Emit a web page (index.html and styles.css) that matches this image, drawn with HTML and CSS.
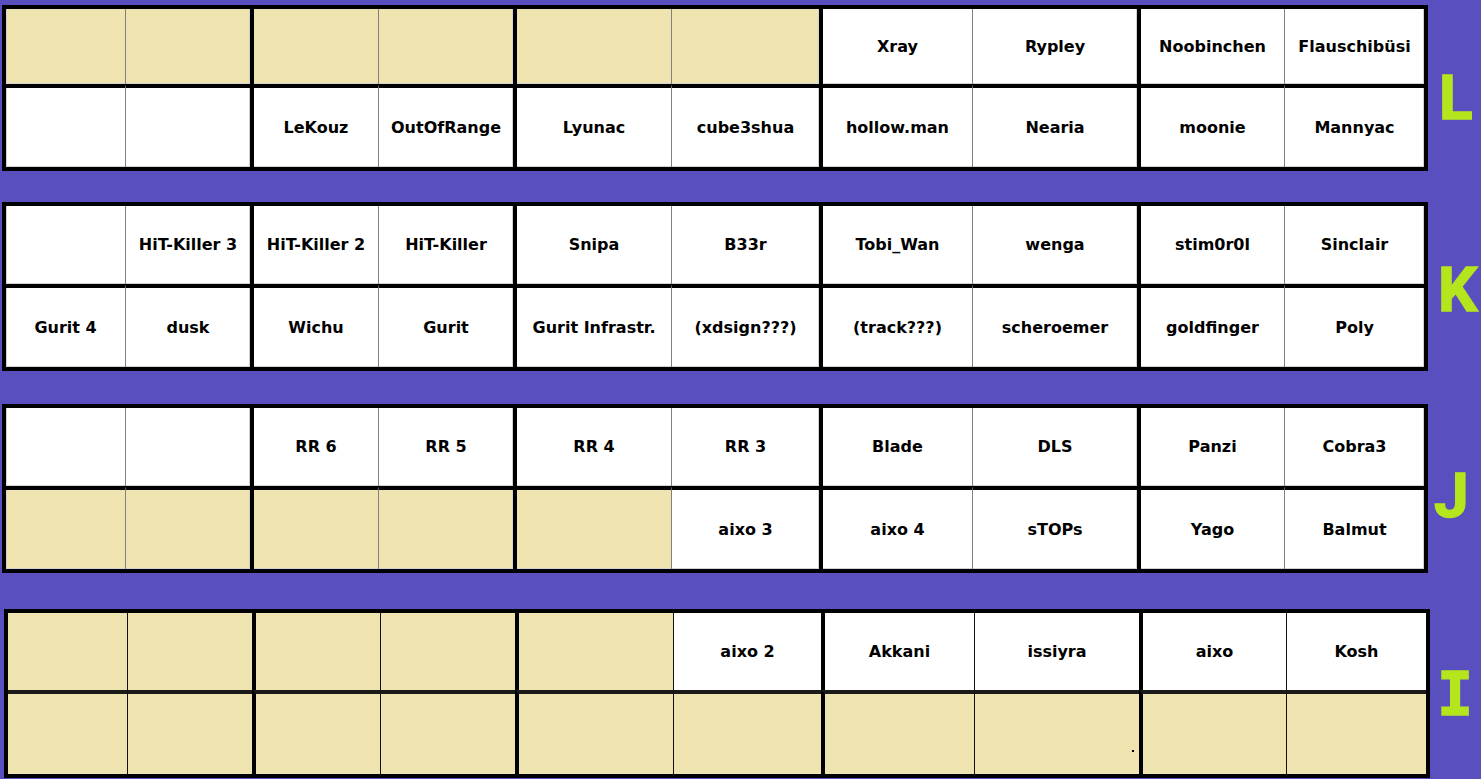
FILE: index.html
```html
<!DOCTYPE html>
<html lang="de">
<head>
<meta charset="utf-8">
<title>Board</title>
<link rel="stylesheet" href="styles.css">
</head>
<body>
<main class="board">
  <section class="block block-l">
    <div class="grid grid-l">
      <div class="cell cream"></div><div class="cell cream"></div><div class="cell cream"></div><div class="cell cream"></div><div class="cell cream"></div><div class="cell cream"></div>
      <div class="cell">Xray</div><div class="cell">Rypley</div><div class="cell">Noobinchen</div><div class="cell">Flauschibüsi</div>
      <div class="cell"></div><div class="cell"></div><div class="cell">LeKouz</div><div class="cell">OutOfRange</div><div class="cell">Lyunac</div>
      <div class="cell">cube3shua</div><div class="cell">hollow.man</div><div class="cell">Nearia</div><div class="cell">moonie</div><div class="cell">Mannyac</div>
    </div>
    <div class="tag tag-l">L</div>
  </section>

  <section class="block block-k">
    <div class="grid grid-k">
      <div class="cell"></div><div class="cell">HiT-Killer 3</div><div class="cell">HiT-Killer 2</div><div class="cell">HiT-Killer</div><div class="cell">Snipa</div>
      <div class="cell">B33r</div><div class="cell">Tobi_Wan</div><div class="cell">wenga</div><div class="cell">stim0r0l</div><div class="cell">Sinclair</div>
      <div class="cell">Gurit 4</div><div class="cell">dusk</div><div class="cell">Wichu</div><div class="cell">Gurit</div><div class="cell">Gurit Infrastr.</div>
      <div class="cell">(xdsign???)</div><div class="cell">(track???)</div><div class="cell">scheroemer</div><div class="cell">goldfinger</div><div class="cell">Poly</div>
    </div>
    <div class="tag tag-k">K</div>
  </section>

  <section class="block block-j">
    <div class="grid grid-j">
      <div class="cell"></div><div class="cell"></div><div class="cell">RR 6</div><div class="cell">RR 5</div><div class="cell">RR 4</div>
      <div class="cell">RR 3</div><div class="cell">Blade</div><div class="cell">DLS</div><div class="cell">Panzi</div><div class="cell">Cobra3</div>
      <div class="cell cream"></div><div class="cell cream"></div><div class="cell cream"></div><div class="cell cream"></div><div class="cell cream"></div>
      <div class="cell">aixo 3</div><div class="cell">aixo 4</div><div class="cell">sTOPs</div><div class="cell">Yago</div><div class="cell">Balmut</div>
    </div>
    <div class="tag tag-j">J</div>
  </section>

  <section class="block block-i">
    <div class="grid grid-i">
      <div class="cell cream"></div><div class="cell cream"></div><div class="cell cream"></div><div class="cell cream"></div><div class="cell cream"></div>
      <div class="cell">aixo 2</div><div class="cell">Akkani</div><div class="cell">issiyra</div><div class="cell">aixo</div><div class="cell">Kosh</div>
      <div class="cell cream"></div><div class="cell cream"></div><div class="cell cream"></div><div class="cell cream"></div><div class="cell cream"></div>
      <div class="cell cream"></div><div class="cell cream"></div><div class="cell cream"><span class="speck"></span></div><div class="cell cream"></div><div class="cell cream"></div>
    </div>
    <div class="tag tag-i">I</div>
  </section>
</main>
</body>
</html>
```

FILE: styles.css
```css
html, body {
  margin: 0;
  padding: 0;
  background: #5a4fbe;
}

.board {
  display: flex;
  flex-direction: column;
  padding: 5px 0 0 2px;
}

.block {
  display: flex;
  align-items: center;
}

.block-k { margin-top: 31px; }
.block-j { margin-top: 33px; }
.block-i { margin-top: 36px; margin-left: 2px; }

.grid {
  display: grid;
  grid-template-columns: 119px 125px 128px 135px 158px 148px 153px 165px 147px 140px;
  border: 4px solid #000;
  background: #fff;
}

.grid-l { grid-template-rows: 75px 83px; }
.grid-k { grid-template-rows: 78px 83px; }
.grid-j { grid-template-rows: 78px 83px; }
.grid-i { grid-template-rows: 77px 84px; }

.cell {
  position: relative;
  box-sizing: border-box;
  display: flex;
  align-items: center;
  justify-content: center;
  padding-bottom: 1px;
  background: #fff;
  color: #000;
  font-family: "DejaVu Sans", "Liberation Sans", sans-serif;
  font-weight: bold;
  font-size: 16px;
  white-space: nowrap;
  box-shadow: inset 0 -1px 0 #d2d2d2;
}

.cell:nth-child(odd) { border-left: 4px solid #000; }
.cell:nth-child(even) {
  border-left: 1px solid #808080;
  box-shadow: inset 0 -1px 0 #d2d2d2, inset -1px 0 0 #d2d2d2;
}
.cell:nth-child(10n+1) {
  border-left: 0;
  box-shadow: inset 0 -1px 0 #d2d2d2, inset 1px 0 0 #d2d2d2;
}
.cell:nth-child(n+11) { border-top: 4px solid #000; }

.cream { background: #efe3b0; }

.grid-i .cell:nth-child(even) { border-left-color: #111; }
.grid-i .cell { box-shadow: none; }
.grid-i .cell:nth-child(n+11) { border-top-color: #1a1a1a; }

.speck {
  position: absolute;
  right: 5px;
  bottom: 22px;
  width: 2px;
  height: 2px;
  background: #000;
}

.tag {
  color: #b5e61d;
  font-family: Roboto, "DejaVu Sans", sans-serif;
  font-weight: bold;
  font-size: 62px;
  line-height: 1;
  margin-left: 11px;
  -webkit-text-stroke: 1.5px #b5e61d;
}

.tag-l { margin-top: 20px; }
.tag-k { margin-top: 6px; margin-left: 10px; }
.tag-j { margin-top: 14px; margin-left: 6px; }
.tag-i {
  font-family: "DejaVu Sans Mono", "Liberation Mono", monospace;
  font-size: 60px;
  margin-left: 7px;
}
```
